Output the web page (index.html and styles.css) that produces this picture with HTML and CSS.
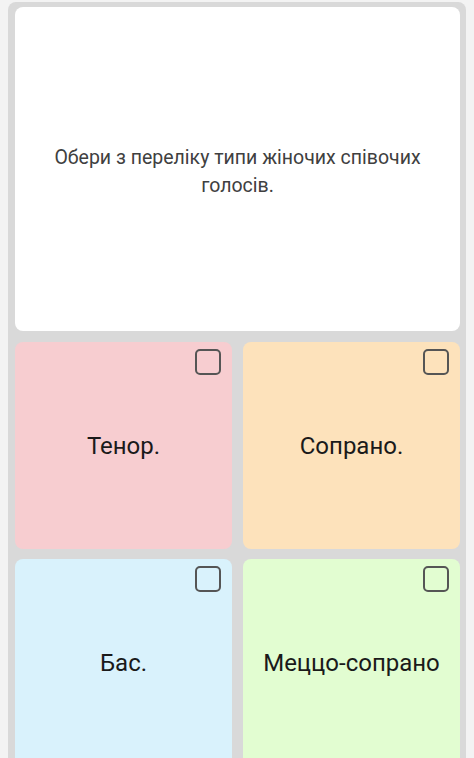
FILE: index.html
```html
<!DOCTYPE html>
<html lang="uk">
<head>
<meta charset="utf-8">
<title>Quiz</title>
<link rel="stylesheet" href="styles.css">
</head>
<body>
<div class="panel">
  <div class="question">
    <p class="question-text">Обери з переліку типи жіночих співочих голосів.</p>
  </div>
  <div class="options">
    <div class="option option-pink"><span class="checkbox"></span><span class="label">Тенор.</span></div>
    <div class="option option-peach"><span class="checkbox"></span><span class="label">Сопрано.</span></div>
    <div class="option option-blue"><span class="checkbox"></span><span class="label">Бас.</span></div>
    <div class="option option-green"><span class="checkbox"></span><span class="label">Меццо-сопрано</span></div>
  </div>
</div>
</body>
</html>
```

FILE: styles.css
```css
html, body {
  margin: 0;
  padding: 0;
  background: #f3f3f3;
  font-family: Roboto, "Noto Sans", Arial, sans-serif;
}
body {
  height: 758px;
  overflow: hidden;
}
.panel {
  margin: 2px 8px 0 8px;
  background: #d9d9d9;
  border-radius: 8px 8px 0 0;
  padding: 5px 6px 0 7px;
  height: 760px;
  box-sizing: border-box;
}
.question {
  background: #ffffff;
  border-radius: 8px;
  height: 324px;
  display: flex;
  align-items: center;
  justify-content: center;
  padding: 6px 30px 0;
  box-sizing: border-box;
}
.question-text {
  margin: 0;
  text-align: center;
  font-size: 19.5px;
  line-height: 28px;
  color: #404040;
}
.options {
  margin-top: 11px;
  display: grid;
  grid-template-columns: 217px 217px;
  grid-auto-rows: 207px;
  column-gap: 11px;
  row-gap: 10px;
}
.option {
  position: relative;
  border-radius: 8px;
  display: flex;
  align-items: center;
  justify-content: center;
}
.option-pink { background: #f7cdd0; }
.option-peach { background: #fde2bb; }
.option-blue { background: #d9f2fc; }
.option-green { background: #e2fdd1; }
.checkbox {
  position: absolute;
  top: 7px;
  right: 11px;
  width: 26px;
  height: 26px;
  box-sizing: border-box;
  border: 2.5px solid #555555;
  border-radius: 5px;
}
.label {
  font-size: 24px;
  color: #1a1a1a;
}
```
